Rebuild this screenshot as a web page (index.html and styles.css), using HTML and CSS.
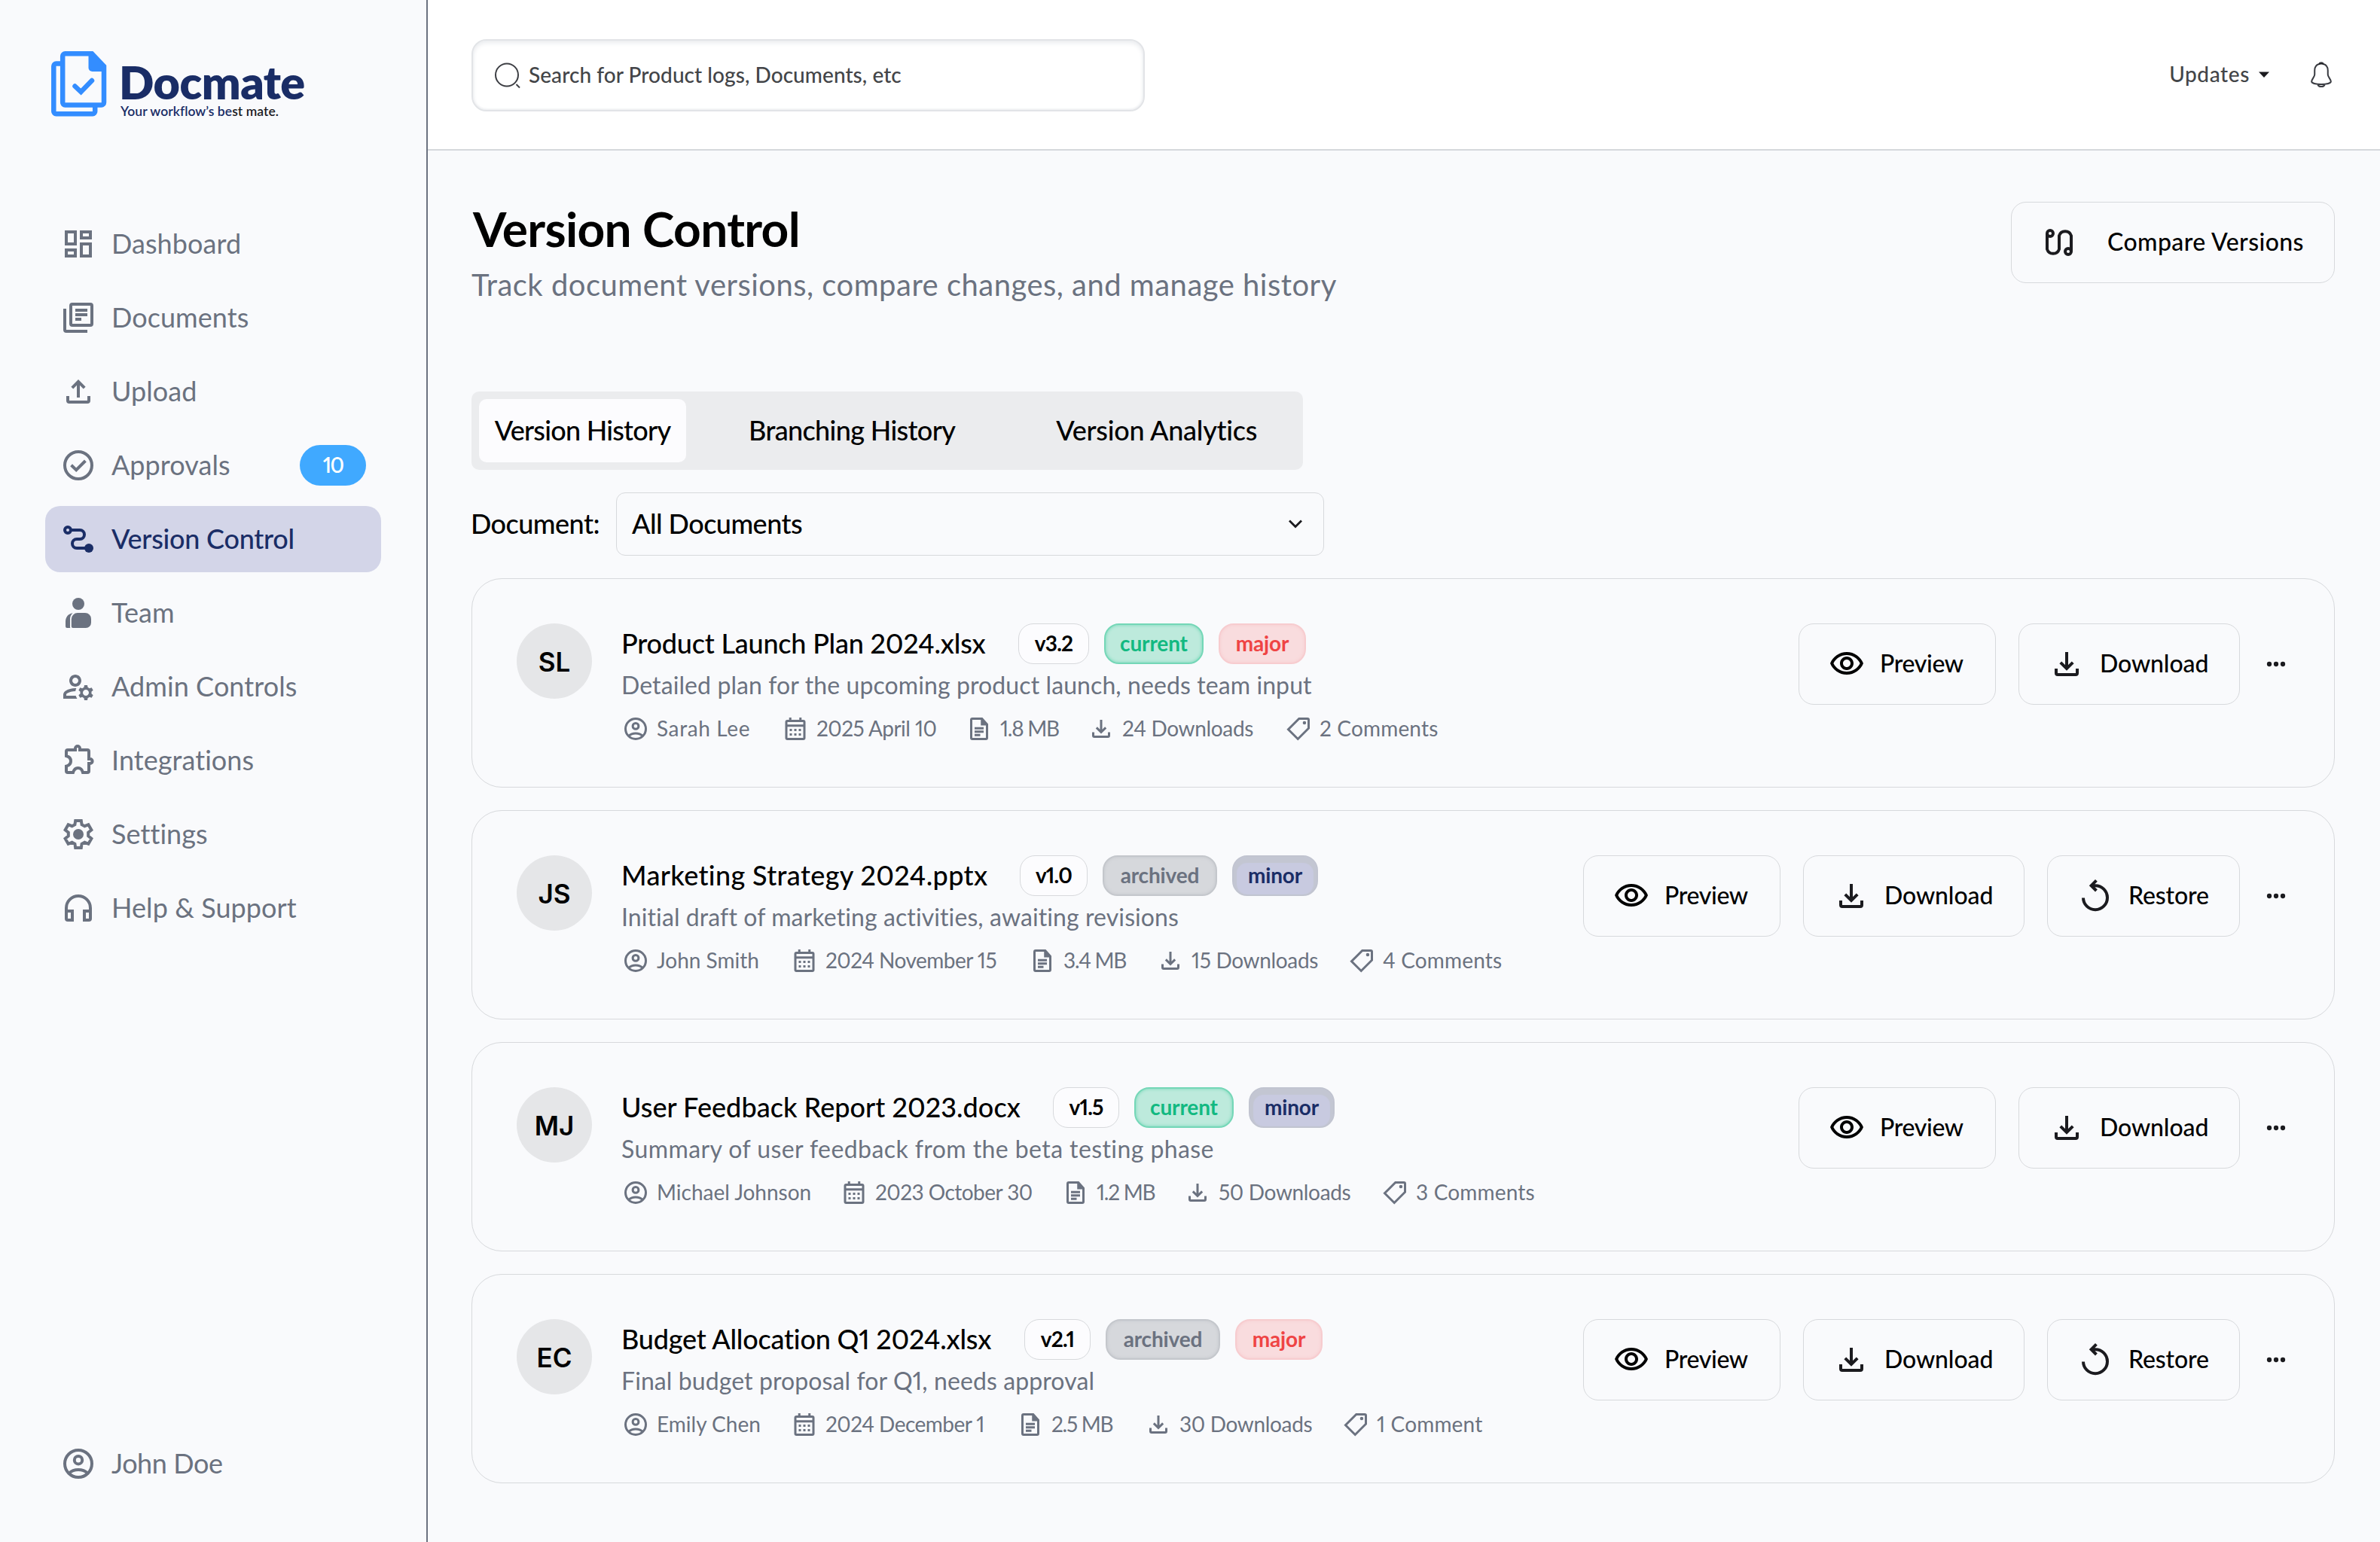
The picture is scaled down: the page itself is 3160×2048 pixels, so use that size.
FILE: index.html
```html
<!doctype html>
<html lang="en">
<head>
    <meta charset="UTF-8">
    <meta name="viewport" content="width=device-width, initial-scale=1.0">
    <title>Docmate - Version Control</title>
    <link rel="stylesheet" href="styles.css">
</head>
<body>
    <!-- icons -->
    <svg class="sprite" xmlns="http://www.w3.org/2000/svg">
        <symbol id="i-dashboard" viewBox="0 0 24 24"><path class="f" d="M19 5v2h-4V5h4M9 5v6H5V5h4m10 8v6h-4v-6h4M9 17v2H5v-2h4M21 3h-8v6h8V3zM11 3H3v10h8V3zm10 8h-8v10h8V11zm-10 4H3v6h8v-6z"/></symbol>
        <symbol id="i-documents" viewBox="0 0 24 24"><rect class="s" x="7" y="3" width="14" height="14" rx="1"/><path class="s" d="M10 7h8M10 10h8M10 13h4M3 6v14a1 1 0 0 0 1 1h14"/></symbol>
        <symbol id="i-upload" viewBox="0 0 24 24"><path class="s" d="M12 16V5.5M7.9 9.6 12 5.4l4.1 4.2M5 15v3a1 1 0 0 0 1 1h12a1 1 0 0 0 1-1v-3"/></symbol>
        <symbol id="i-approvals" viewBox="0 0 24 24"><circle class="s" cx="12" cy="12" r="9"/><path class="s" d="M7.3 11.9l3.3 3.2 6.1-6.1"/></symbol>
        <symbol id="i-route" viewBox="0 0 24 24"><circle class="s" cx="5" cy="6" r="2"/><path class="s" d="M7 6h6a3 3 0 0 1 0 6h-2a3 3 0 0 0 0 6h8"/><circle class="f" cx="19" cy="18" r="3"/></symbol>
        <symbol id="i-team" viewBox="0 0 24 24"><circle class="f" cx="12" cy="6" r="4"/><path class="f" d="M11.5 12h5a4 4 0 0 1 4 4v2.5A3.5 3.5 0 0 1 17 22H8.4a1 1 0 0 1-1-1v-4.9a4.1 4.1 0 0 1 4.1-4.1zM8.3 12.1C5 12.6 3.5 15 3.5 18v3a1 1 0 0 0 1 1h2.2c-.2-.3-.2-1-.2-1v-5c0-1.6.8-3 1.8-3.9z"/></symbol>
        <symbol id="i-admin" viewBox="0 0 24 24"><path class="f" d="M4 18v-.65c0-.34.16-.66.41-.81C6.1 15.53 8.03 15 10 15c.03 0 .05 0 .08.01.1-.7.3-1.37.59-1.98-.22-.02-.44-.03-.67-.03-2.42 0-4.68.67-6.61 1.82-.88.52-1.39 1.5-1.39 2.53V20h9.26c-.42-.6-.75-1.28-.97-2H4zM10 12c2.21 0 4-1.79 4-4s-1.79-4-4-4-4 1.79-4 4 1.79 4 4 4zm0-6c1.1 0 2 .9 2 2s-.9 2-2 2-2-.9-2-2 .9-2 2-2zM20.75 16c0-.22-.03-.42-.06-.63l1.14-1.01-1-1.73-1.45.49c-.32-.27-.68-.48-1.08-.63L18 11h-2l-.3 1.49c-.4.15-.76.36-1.08.63l-1.45-.49-1 1.73 1.14 1.01c-.03.21-.06.41-.06.63s.03.42.06.63l-1.14 1.01 1 1.73 1.45-.49c.32.27.68.48 1.08.63L16 21h2l.3-1.49c.4-.15.76-.36 1.08-.63l1.45.49 1-1.73-1.14-1.01c.03-.21.06-.41.06-.63zM17 18c-1.1 0-2-.9-2-2s.9-2 2-2 2 .9 2 2-.9 2-2 2z"/></symbol>
        <symbol id="i-puzzle" viewBox="0 0 24 24"><path class="s" d="M4 9V6a1 1 0 0 1 1-1h5V4a1.5 1.5 0 0 1 3 0v1h5a1 1 0 0 1 1 1v5h.8a1.5 1.5 0 0 1 0 3H19v5a1 1 0 0 1-1 1h-3c-.5-2-1.8-3-3.2-3s-2.7 1-3.3 3H5a1 1 0 0 1-1-1v-3.2c2-.5 3-1.8 3-3.4S6 9.5 4 9z"/></symbol>
        <symbol id="i-settings" viewBox="0 0 24 24"><path class="s" d="M10.1 3h3.8l.4 2.6 1.9 1 2.5-1 2 3.5-2.1 1.7v2.4l2.1 1.7-2 3.5-2.5-1-1.9 1-.4 2.6h-3.8l-.4-2.6-1.9-1-2.5 1-2-3.5 2.1-1.7v-2.4L3.3 9.1l2-3.5 2.5 1 1.9-1z"/><circle class="f" cx="12" cy="12" r="3.5"/></symbol>
        <symbol id="i-help" viewBox="0 0 24 24"><path class="s" d="M4 14v-2a8 8 0 0 1 16 0v2M4 14h4v6H5a1 1 0 0 1-1-1zM20 14h-4v6h3a1 1 0 0 0 1-1z"/></symbol>
        <symbol id="i-user" viewBox="0 0 24 24"><circle class="s" cx="12" cy="12" r="9"/><circle class="s" cx="12" cy="9.6" r="2.6"/><path class="s" d="M5.8 18.4c1.5-1.5 3.7-2.4 6.2-2.4s4.7.9 6.2 2.4"/></symbol>
        <symbol id="i-calendar" viewBox="0 0 24 24"><rect class="s" x="4" y="5" width="16" height="16" rx="1"/><path class="s" d="M4 9.2h16M7.5 2v3M16.5 2v3"/><path class="f" d="M7 12h2v2H7zM11 12h2v2h-2zM15 12h2v2h-2zM7 16h2v2H7zM11 16h2v2h-2zM15 16h2v2h-2z"/></symbol>
        <symbol id="i-file" viewBox="0 0 24 24"><path class="s" d="M14.5 3H6a1 1 0 0 0-1 1v16a1 1 0 0 0 1 1h12a1 1 0 0 0 1-1V8z"/><path class="f" d="M13.5 3v6H19V8l-4.5-5z"/><path class="s" d="M8 11.500h8M8 14.500h8M8 17.500h5"/></symbol>
        <symbol id="i-download" viewBox="0 0 24 24"><path class="s" d="M12 4v11M7.9 10.900 12 15l4.100-4.100M5 15v3a1 1 0 0 0 1 1h12a1 1 0 0 0 1-1v-3"/></symbol>
        <symbol id="i-tag" viewBox="0 0 24 24"><path class="s" d="M12.500 3H20a1 1 0 0 1 1 1v7.500L11.500 21 3 12.500z"/><circle class="f" cx="17.300" cy="6.700" r="1.500"/></symbol>
        <symbol id="i-eye" viewBox="0 0 24 24"><path class="f" d="M12 6c3.790 0 7.170 2.130 8.820 5.500C19.170 14.870 15.790 17 12 17s-7.170-2.130-8.820-5.500C4.830 8.130 8.210 6 12 6m0-2C7 4 2.730 7.110 1 11.500 2.730 15.890 7 19 12 19s9.270-3.110 11-7.500C21.270 7.110 17 4 12 4zm0 5c1.380 0 2.500 1.120 2.500 2.500S13.380 14 12 14s-2.500-1.120-2.500-2.500S10.620 9 12 9m0-2c-2.480 0-4.500 2.020-4.500 4.500S9.520 16 12 16s4.500-2.020 4.500-4.500S14.480 7 12 7z"/></symbol>
        <symbol id="i-restore" viewBox="0 0 24 24"><path class="s" d="M4 13.200A8 8 0 1 0 12 5.100H9.500M12.700 1.700 9.300 5.100l3.400 3.400"/></symbol>
        <symbol id="i-compare" viewBox="0 0 24 24"><circle class="s" cx="6" cy="6" r="2"/><circle class="s" cx="18" cy="18" r="2"/><path class="s" d="M4 6v10.500a4.200 4.200 0 0 0 8 0v-9a4.200 4.200 0 0 1 8 0V18"/></symbol>
        <symbol id="i-more" viewBox="0 0 24 24"><circle class="f" cx="6" cy="12" r="2.100"/><circle class="f" cx="12" cy="12" r="2.100"/><circle class="f" cx="18" cy="12" r="2.100"/></symbol>
    </svg>

    <!-- sidebar -->
    <aside class="sidebar">
        <div class="logo">
            <svg class="logo-mark" viewBox="0 0 74 87">
                <path d="M13 16.500H6.500a3.200 3.200 0 0 0-3.200 3.200V80a3.200 3.200 0 0 0 3.200 3.200H55a3.200 3.200 0 0 0 3.200-3.200v-7M18.500 3.300H54L70 20v48a3.500 3.500 0 0 1-3.500 3.500h-48A3.300 3.300 0 0 1 15.200 68V6.600a3.300 3.300 0 0 1 3.300-3.300z" fill="none" stroke="#338dff" stroke-width="6.500"/>
                <path d="M49.500 4v18a5 5 0 0 0 5 5H70v-7L54 3z" fill="#338dff"/>
                <path d="M31.500 46.500l8 7.500L54 39" fill="none" stroke="#338dff" stroke-width="6.500" stroke-linecap="round"/>
            </svg>
            <div class="logo-text">
                <strong>Docmate</strong>
                <small>Your workflow’s be<i>st mate.</i></small>
            </div>
        </div>
        <ul class="nav">
            <li><svg><use href="#i-dashboard"/></svg><span>Dashboard</span></li>
            <li><svg><use href="#i-documents"/></svg><span>Documents</span></li>
            <li><svg><use href="#i-upload"/></svg><span>Upload</span></li>
            <li><svg><use href="#i-approvals"/></svg><span>Approvals</span><b class="count">10</b></li>
            <li class="active"><svg><use href="#i-route"/></svg><span>Version Control</span></li>
            <li><svg><use href="#i-team"/></svg><span>Team</span></li>
            <li><svg><use href="#i-admin"/></svg><span>Admin Controls</span></li>
            <li><svg><use href="#i-puzzle"/></svg><span>Integrations</span></li>
            <li><svg><use href="#i-settings"/></svg><span>Settings</span></li>
            <li><svg><use href="#i-help"/></svg><span>Help &amp; Support</span></li>
            <li class="account"><svg><use href="#i-user"/></svg><span>John Doe</span></li>
        </ul>
    </aside>

    <div class="page">
        <!-- top bar -->
        <header class="topbar">
            <div class="search">
                <svg viewBox="0 0 36 36"><circle cx="17" cy="17.500" r="15"/><path d="M29.500 30l4.500 4.500"/></svg>
                <span>Search for Product logs, Documents, etc</span>
            </div>
            <div class="top-right">
                <span class="updates">Updates</span>
                <svg class="caret" viewBox="0 0 28 28"><path d="M7 10.500h14l-7 7.500z"/></svg>
                <svg class="bell" viewBox="0 0 32 32"><path d="M16 2c-1.500 0-2.300.8-2.600 1.600C10 4.700 8.200 7.600 8.200 11v5c0 3-3.600 5.600-3.600 8.300 0 2 5 3.200 11.400 3.200s11.400-1.200 11.400-3.200c0-2.700-3.600-5.300-3.600-8.300v-5c0-3.400-1.800-6.300-5.200-7.400C18.300 2.800 17.500 2 16 2zM11.800 27.500c.5 1.800 2.200 2.800 4.200 2.800s3.700-1 4.200-2.800"/><path class="top" d="M12.500 4.500c1-2.600 6-2.600 7 0-2-.8-5-.8-7 0z"/></svg>
            </div>
        </header>

        <main class="main">
            <div class="heading">
                <div>
                    <h1>Version Control</h1>
                    <p>Track document versions, compare changes, and manage history</p>
                </div>
                <button class="btn compare"><svg><use href="#i-compare"/></svg><span>Compare Versions</span></button>
            </div>

            <div class="tabs">
                <div class="tab tab-history on"><span>Version History</span></div>
                <div class="tab tab-branch"><span>Branching History</span></div>
                <div class="tab tab-analytics"><span>Version Analytics</span></div>
            </div>

            <div class="filter">
                <label>Document:</label>
                <div class="select">
                    <span>All Documents</span>
                    <svg viewBox="0 0 24 24"><path d="M4 7.500l8 8 8-8"/></svg>
                </div>
            </div>

            <!-- versions -->
            <div class="card plan">
                <div class="avatar">SL</div>
                <div class="info">
                    <div class="title-row">
                        <h2>Product Launch Plan 2024.xlsx</h2>
                        <span class="tag ver">v3.2</span>
                        <span class="tag current">current</span>
                        <span class="tag major">major</span>
                    </div>
                    <p class="desc">Detailed plan for the upcoming product launch, needs team input</p>
                    <div class="meta">
                        <div><svg><use href="#i-user"/></svg><span>Sarah Lee</span></div>
                        <div><svg><use href="#i-calendar"/></svg><span>2025 April 10</span></div>
                        <div><svg><use href="#i-file"/></svg><span>1.8 MB</span></div>
                        <div><svg><use href="#i-download"/></svg><span>24 Downloads</span></div>
                        <div><svg><use href="#i-tag"/></svg><span>2 Comments</span></div>
                    </div>
                </div>
                <div class="actions">
                    <button class="btn preview"><svg><use href="#i-eye"/></svg><span>Preview</span></button>
                    <button class="btn download"><svg><use href="#i-download"/></svg><span>Download</span></button>
                    <svg class="more"><use href="#i-more"/></svg>
                </div>
            </div>

            <div class="card strategy">
                <div class="avatar">JS</div>
                <div class="info">
                    <div class="title-row">
                        <h2>Marketing Strategy 2024.pptx</h2>
                        <span class="tag ver">v1.0</span>
                        <span class="tag archived">archived</span>
                        <span class="tag minor">minor</span>
                    </div>
                    <p class="desc">Initial draft of marketing activities, awaiting revisions</p>
                    <div class="meta">
                        <div><svg><use href="#i-user"/></svg><span>John Smith</span></div>
                        <div><svg><use href="#i-calendar"/></svg><span>2024 November 15</span></div>
                        <div><svg><use href="#i-file"/></svg><span>3.4 MB</span></div>
                        <div><svg><use href="#i-download"/></svg><span>15 Downloads</span></div>
                        <div><svg><use href="#i-tag"/></svg><span>4 Comments</span></div>
                    </div>
                </div>
                <div class="actions">
                    <button class="btn preview"><svg><use href="#i-eye"/></svg><span>Preview</span></button>
                    <button class="btn download"><svg><use href="#i-download"/></svg><span>Download</span></button>
                    <button class="btn restore"><svg><use href="#i-restore"/></svg><span>Restore</span></button>
                    <svg class="more"><use href="#i-more"/></svg>
                </div>
            </div>

            <div class="card feedback">
                <div class="avatar">MJ</div>
                <div class="info">
                    <div class="title-row">
                        <h2>User Feedback Report 2023.docx</h2>
                        <span class="tag ver">v1.5</span>
                        <span class="tag current">current</span>
                        <span class="tag minor">minor</span>
                    </div>
                    <p class="desc">Summary of user feedback from the beta testing phase</p>
                    <div class="meta">
                        <div><svg><use href="#i-user"/></svg><span>Michael Johnson</span></div>
                        <div><svg><use href="#i-calendar"/></svg><span>2023 October 30</span></div>
                        <div><svg><use href="#i-file"/></svg><span>1.2 MB</span></div>
                        <div><svg><use href="#i-download"/></svg><span>50 Downloads</span></div>
                        <div><svg><use href="#i-tag"/></svg><span>3 Comments</span></div>
                    </div>
                </div>
                <div class="actions">
                    <button class="btn preview"><svg><use href="#i-eye"/></svg><span>Preview</span></button>
                    <button class="btn download"><svg><use href="#i-download"/></svg><span>Download</span></button>
                    <svg class="more"><use href="#i-more"/></svg>
                </div>
            </div>

            <div class="card budget">
                <div class="avatar">EC</div>
                <div class="info">
                    <div class="title-row">
                        <h2>Budget Allocation Q1 2024.xlsx</h2>
                        <span class="tag ver">v2.1</span>
                        <span class="tag archived">archived</span>
                        <span class="tag major">major</span>
                    </div>
                    <p class="desc">Final budget proposal for Q1, needs approval</p>
                    <div class="meta">
                        <div><svg><use href="#i-user"/></svg><span>Emily Chen</span></div>
                        <div><svg><use href="#i-calendar"/></svg><span>2024 December 1</span></div>
                        <div><svg><use href="#i-file"/></svg><span>2.5 MB</span></div>
                        <div><svg><use href="#i-download"/></svg><span>30 Downloads</span></div>
                        <div><svg><use href="#i-tag"/></svg><span>1 Comment</span></div>
                    </div>
                </div>
                <div class="actions">
                    <button class="btn preview"><svg><use href="#i-eye"/></svg><span>Preview</span></button>
                    <button class="btn download"><svg><use href="#i-download"/></svg><span>Download</span></button>
                    <button class="btn restore"><svg><use href="#i-restore"/></svg><span>Restore</span></button>
                    <svg class="more"><use href="#i-more"/></svg>
                </div>
            </div>
        </main>
    </div>
</body>
</html>
```
FILE: styles.css
```css
*{
    box-sizing: border-box;
}
body,ul,h1,h2,p{
    margin: 0;
}
ul{
    padding-left: 0;
    list-style: none;
}
body{
    display: flex;
    height: 2048px;
    background: #f9fafc;
    color: #000;
    font-family: Lato, "Liberation Sans", sans-serif;
    font-variant-numeric: proportional-nums;
    font-variant-ligatures: none;
    white-space: nowrap;
    overflow: hidden;
}
svg{
    flex: none;
    width: 48px;
    height: 48px;
    overflow: visible;
}
.sprite{
    position: absolute;
    width: 0;
    height: 0;
}
.f{
    fill: currentColor;
}
.s{
    fill: none;
    stroke: currentColor;
    stroke-width: 2;
}

/* sidebar */
.sidebar{
    display: flex;
    flex-direction: column;
    flex: none;
    width: 568px;
    padding: 68px 60px 60px;
    border-right: 2px solid #6b7280;
}
.logo{
    display: flex;
    gap: 16px;
    height: 212px;
    padding-left: 8px;
}
.logo-mark{
    width: 74px;
    height: 87px;
}
.logo-text strong{
    display: block;
    margin-top: 10px;
    font-size: 61px;
    font-weight: 800;
    line-height: 62px;
    letter-spacing: -.008em;
    color: #1a2d66;
}
.logo-text small{
    display: block;
    font-size: 17.5px;
    font-weight: 600;
    line-height: 20px;
    letter-spacing: .003em;
    color: #1a2d66;
    padding-left: 2px;
    margin-top: -2px;
}
.logo-text i{
    font-style: normal;
    color: #1b1b1f;
}
.nav{
    display: flex;
    flex-direction: column;
    flex: 1;
    gap: 10px;
}
.nav li{
    display: flex;
    align-items: center;
    gap: 20px;
    width: 446px;
    height: 88px;
    padding: 0 20px;
    border-radius: 20px;
    color: #6b7280;
    font-size: 36px;
    letter-spacing: .002em;
}
.nav span{
    padding-bottom: 2px;
}
.nav .active{
    background: #d3d5e8;
    color: #1a2d66;
    font-weight: 500;
    letter-spacing: -.007em;
}
.nav .account{
    margin-top: auto;
    letter-spacing: -.012em;
}
.count{
    width: 88px;
    height: 54px;
    margin-left: auto;
    border-radius: 27px;
    background: #40a9ff;
    color: #fff;
    font-size: 28px;
    font-weight: 600;
    line-height: 52px;
    letter-spacing: -.06em;
    text-align: center;
}

/* top bar */
.page{
    flex: 1;
}
.topbar{
    display: flex;
    align-items: center;
    justify-content: space-between;
    height: 200px;
    padding: 0 60px 0 58px;
    border-bottom: 2px solid #d5d8dc;
    background: #fff;
    color: #434548;
    font-size: 28px;
    font-weight: 500;
}
.search{
    display: flex;
    align-items: center;
    gap: 10px;
    width: 894px;
    height: 96px;
    margin-top: 2px;
    padding: 0 28px;
    border: 2px solid #e2e4e7;
    border-radius: 20px;
    box-shadow: inset 0 3px 6px #e9ebee, inset 0 -1px 3px #e9ebee;
    letter-spacing: .002em;
}
.search svg{
    width: 36px;
    height: 36px;
    fill: none;
    stroke: #3d3f44;
    stroke-width: 2;
}
.search span,.updates{
    padding-bottom: 2px;
}
.top-right{
    display: flex;
    align-items: center;
}
.updates{
    margin-right: 5px;
    letter-spacing: .022em;
}
.caret{
    width: 28px;
    height: 28px;
    fill: #1b1b1f;
}
.bell{
    width: 36px;
    height: 36px;
    margin-left: 44px;
    fill: none;
    stroke: #3a3c42;
    stroke-width: 1.8;
}
.bell .top{
    fill: #1b1b1f;
    stroke: none;
}

/* heading */
.main{
    padding: 68px 60px 0 58px;
}
.heading{
    display: flex;
    justify-content: space-between;
    align-items: flex-start;
    height: 252px;
}
h1{
    padding-left: 2px;
    font-size: 64px;
    font-weight: 700;
    line-height: 72px;
    letter-spacing: -.010em;
}
.heading p{
    margin-top: 14px;
    font-size: 40px;
    line-height: 48px;
    letter-spacing: .012em;
    color: #6b7280;
}
.btn{
    display: flex;
    align-items: center;
    gap: 20px;
    height: 108px;
    padding: 0 0 0 39px;
    border: 1px solid #d7d9dc;
    border-radius: 20px;
    background: none;
    color: #000;
    font: 500 32px Lato, "Liberation Sans", sans-serif;
}
.btn svg{
    color: #1b1b1f;
}
.btn span{
    padding-bottom: 3px;
}
.compare{
    width: 430px;
    gap: 40px;
    letter-spacing: .013em;
}
.preview{
    width: 262px;
    letter-spacing: -.011em;
}
.preview svg{
    color: #000;
}
.download{
    width: 294px;
    letter-spacing: -.003em;
}
.restore{
    width: 256px;
    letter-spacing: -.004em;
}

/* tabs */
.tabs{
    display: flex;
    width: 1104px;
    height: 104px;
    padding: 10px;
    border-radius: 10px;
    background: #ebecee;
    font-size: 36px;
    font-weight: 500;
    letter-spacing: -.018em;
}
.tab{
    display: flex;
    align-items: center;
    justify-content: center;
    border-radius: 10px;
}
.tab span{
    padding-bottom: 2px;
}
.tab-history{
    width: 276px;
    letter-spacing: -.021em;
}
.tab-branch{
    width: 442px;
}
.tab-analytics{
    width: 370px;
    letter-spacing: -.007em;
}
.on{
    background: #fcfcfe;
}

/* document filter */
.filter{
    display: flex;
    align-items: center;
    justify-content: space-between;
    width: 1132px;
    height: 84px;
    margin: 30px 0;
    font-size: 36px;
    font-weight: 500;
    letter-spacing: -.015em;
}
.filter label,.filter span{
    padding-bottom: 3px;
}
.filter label{
    margin-left: -1px;
}
.select{
    display: flex;
    align-items: center;
    justify-content: space-between;
    width: 940px;
    height: 84px;
    padding: 0 25px 0 20px;
    border: 1px solid #d7d9dc;
    border-radius: 12px;
}
.select svg{
    width: 24px;
    height: 24px;
    fill: none;
    stroke: #1b1b1f;
    stroke-width: 2.8;
}

/* version cards */
.card{
    display: flex;
    align-items: flex-start;
    height: 278px;
    margin-bottom: 30px;
    padding: 59px;
    border: 1px solid #d7d9dc;
    border-radius: 40px;
}
.avatar{
    flex: none;
    width: 100px;
    height: 100px;
    margin-right: 39px;
    border-radius: 50%;
    background: #e5e6e8;
    font: 600 35px/102px Inter, "Liberation Sans", sans-serif;
    text-align: center;
}
.title-row{
    display: flex;
    align-items: center;
    height: 54px;
}
h2{
    font-size: 36px;
    font-weight: 500;
    letter-spacing: -.006em;
    padding: 0 0 3px;
}
.plan h2{
    width: 527px;
}
.strategy h2{
    width: 529px;
    letter-spacing: .010em;
}
.feedback h2{
    width: 573px;
    letter-spacing: .001em;
}
.budget h2{
    width: 535px;
}
.tag{
    width: 90px;
    height: 54px;
    margin-right: 20px;
    border: 2px solid;
    border-radius: 20px;
    font-size: 28px;
    font-weight: 700;
    line-height: 48px;
    letter-spacing: -.005em;
    text-align: center;
}
.ver{
    border: 1px solid #d7d9dc;
    background: #fcfcfe;
    line-height: 50px;
    letter-spacing: -.03em;
}
.plan .ver{
    width: 94px;
}
.feedback .ver,.budget .ver{
    width: 88px;
}
.current{
    width: 132px;
    border-color: #74d7b7;
    background: #bdeadc;
    color: #12b981;
    box-shadow: inset 0 0 4px #74d7b7;
}
.major{
    width: 116px;
    border-color: #f7cccf;
    background: #f9dcde;
    color: #ef4444;
    box-shadow: inset 0 0 4px #f7cccf;
}
.archived{
    width: 152px;
    border-color: #c4c7cc;
    background: #d6d8dc;
    color: #6b7280;
    box-shadow: inset 0 0 4px #c4c7cc;
}
.minor{
    width: 114px;
    border-color: #c1c4d0;
    background: #c8cae0;
    color: #1a2d66;
    box-shadow: inset 0 4px 1px 4px #c3c6d2;
}
.desc{
    margin-top: 8px;
    font-size: 32px;
    line-height: 40px;
    letter-spacing: .003em;
    color: #6b7280;
}
.feedback .desc{
    letter-spacing: .013em;
}
.meta{
    display: grid;
    margin: 20px 0 0 1px;
    color: #6b7280;
    font-size: 28px;
}
.plan .meta{
    grid-template-columns: 212px 244px 162px 262px 204px;
}
.strategy .meta{
    grid-template-columns: 224px 316px 170px 254px 204px;
}
.feedback .meta{
    grid-template-columns: 290px 294px 162px 262px 204px;
}
.budget .meta{
    grid-template-columns: 224px 300px 170px 262px 204px;
}
.meta div{
    display: flex;
    align-items: center;
    gap: 10px;
    height: 36px;
}
.meta div:nth-child(2){
    letter-spacing: -.019em;
}
.meta div:nth-child(3){
    letter-spacing: -.045em;
}
.meta div:nth-child(4){
    letter-spacing: -.012em;
}
.meta div:nth-child(5){
    letter-spacing: .006em;
}
.plan .meta div:first-child{
    letter-spacing: .022em;
}
.meta svg{
    width: 36px;
    height: 36px;
}
.meta span{
    padding-bottom: 2px;
}
.actions{
    display: flex;
    align-items: center;
    gap: 30px;
    margin-left: auto;
}
.more{
    width: 36px;
    height: 36px;
    color: #1b1b1f;
}
```
